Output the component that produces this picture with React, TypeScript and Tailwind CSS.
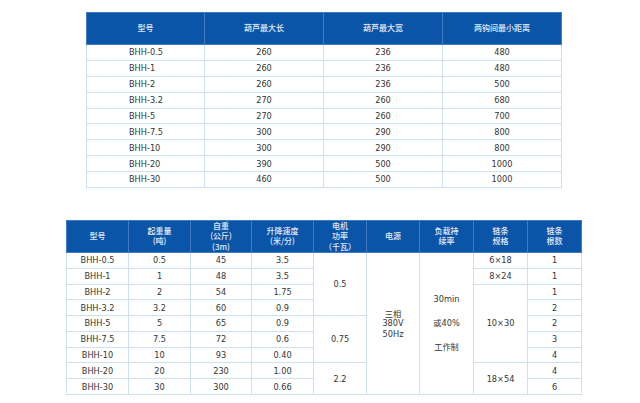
const body = "font-['DejaVu_Sans','Noto_Sans_CJK_SC',sans-serif] text-[8.2px] text-[#353535]";
const cell = "border border-[#cfe1f1] text-center align-middle p-0 leading-none";
const head =
  "border border-[#3f7cc2] bg-[#0b55a8] text-[#e2ebf7] text-center align-middle p-0 font-['Noto_Sans_CJK_SC',sans-serif] text-[8px] leading-[10.3px] font-medium";

const sizes = [
  ["BHH-0.5", "260", "236", "480"],
  ["BHH-1", "260", "236", "480"],
  ["BHH-2", "260", "236", "500"],
  ["BHH-3.2", "270", "260", "680"],
  ["BHH-5", "270", "260", "700"],
  ["BHH-7.5", "300", "290", "800"],
  ["BHH-10", "300", "290", "800"],
  ["BHH-20", "390", "500", "1000"],
  ["BHH-30", "460", "500", "1000"],
];

const specs = [
  ["BHH-0.5", "0.5", "45", "3.5", "1"],
  ["BHH-1", "1", "48", "3.5", "1"],
  ["BHH-2", "2", "54", "1.75", "1"],
  ["BHH-3.2", "3.2", "60", "0.9", "2"],
  ["BHH-5", "5", "65", "0.9", "2"],
  ["BHH-7.5", "7.5", "72", "0.6", "3"],
  ["BHH-10", "10", "93", "0.40", "4"],
  ["BHH-20", "20", "230", "1.00", "4"],
  ["BHH-30", "30", "300", "0.66", "6"],
];

// merged cells (motor, power, duty, chain size) that start on row i
function mergedCells(i: number) {
  const out: React.ReactNode[] = [];
  if (i === 0) out.push(<td key="p" rowSpan={4} className={cell}>0.5</td>);
  if (i === 4) out.push(<td key="p" rowSpan={3} className={cell}>0.75</td>);
  if (i === 7) out.push(<td key="p" rowSpan={2} className={cell}>2.2</td>);
  if (i === 0) {
    out.push(
      <td key="s" rowSpan={9} className={cell}>
        <div className="flex flex-col items-center leading-[10.5px]">
          <span className="font-['Noto_Sans_CJK_SC',sans-serif]">三相</span>
          <span>380V</span>
          <span>50Hz</span>
        </div>
      </td>
    );
    out.push(
      <td key="d" rowSpan={9} className={cell}>
        <div className="flex flex-col items-center gap-[15px] pb-[2px]">
          <span>30min</span>
          <span className="font-['Noto_Sans_CJK_SC',sans-serif]">
            或<span className="font-['DejaVu_Sans',sans-serif]">40%</span>
          </span>
          <span className="font-['Noto_Sans_CJK_SC',sans-serif]">工作制</span>
        </div>
      </td>
    );
  }
  if (i === 0) out.push(<td key="c" className={cell}>6×18</td>);
  if (i === 1) out.push(<td key="c" className={cell}>8×24</td>);
  if (i === 2) out.push(<td key="c" rowSpan={5} className={cell}>10×30</td>);
  if (i === 7) out.push(<td key="c" rowSpan={2} className={cell}>18×54</td>);
  return out;
}

function SizeTable() {
  return (
    <table className={`${body} border-collapse table-fixed w-[475px] border border-[#cfe1f1]`}>
      <colgroup>
        <col className="w-[118px]" />
        <col className="w-[119px]" />
        <col className="w-[119px]" />
        <col className="w-[119px]" />
      </colgroup>
      <thead>
        <tr className="h-[32px]">
          <th className={head}>型号</th>
          <th className={head}>葫芦最大长</th>
          <th className={head}>葫芦最大宽</th>
          <th className={head}>两钩间最小距离</th>
        </tr>
      </thead>
      <tbody>
        {sizes.map((r) => (
          <tr key={r[0]} className="h-[15.9px]">
            <td className={`${cell} text-left pl-[42px]`}>{r[0]}</td>
            <td className={cell}>{r[1]}</td>
            <td className={cell}>{r[2]}</td>
            <td className={cell}>{r[3]}</td>
          </tr>
        ))}
      </tbody>
    </table>
  );
}

function SpecTable() {
  const widths = ["w-[62px]", "w-[62px]", "w-[61px]", "w-[62px]", "w-[53px]", "w-[53px]", "w-[54px]", "w-[54px]", "w-[54px]"];
  return (
    <table className={`${body} border-collapse table-fixed w-[515px] border border-[#cfe1f1]`}>
      <colgroup>
        {widths.map((w, i) => (
          <col key={i} className={w} />
        ))}
      </colgroup>
      <thead>
        <tr className="h-[31px]">
          <th className={head}>型号</th>
          <th className={head}>起重量<br />(吨)</th>
          <th className={head}>自重<br />(公斤)<br />(3m)</th>
          <th className={head}>升降速度<br />(米/分)</th>
          <th className={head}>电机<br />功率<br />（千瓦）</th>
          <th className={head}>电源</th>
          <th className={head}>负载持<br />续率</th>
          <th className={head}>链条<br />规格</th>
          <th className={head}>链条<br />根数</th>
        </tr>
      </thead>
      <tbody>
        {specs.map((r, i) => (
          <tr key={r[0]} className="h-[15.8px]">
            <td className={cell}>{r[0]}</td>
            <td className={cell}>{r[1]}</td>
            <td className={cell}>{r[2]}</td>
            <td className={cell}>{r[3]}</td>
            {mergedCells(i)}
            <td className={cell}>{r[4]}</td>
          </tr>
        ))}
      </tbody>
    </table>
  );
}

export default function App() {
  return (
    <div className="w-[640px] h-[403px] bg-white overflow-hidden">
      <div className="pt-[12px] pl-[86px]">
        <SizeTable />
      </div>
      <div className="pt-[32px] pl-[66px]">
        <SpecTable />
      </div>
    </div>
  );
}
